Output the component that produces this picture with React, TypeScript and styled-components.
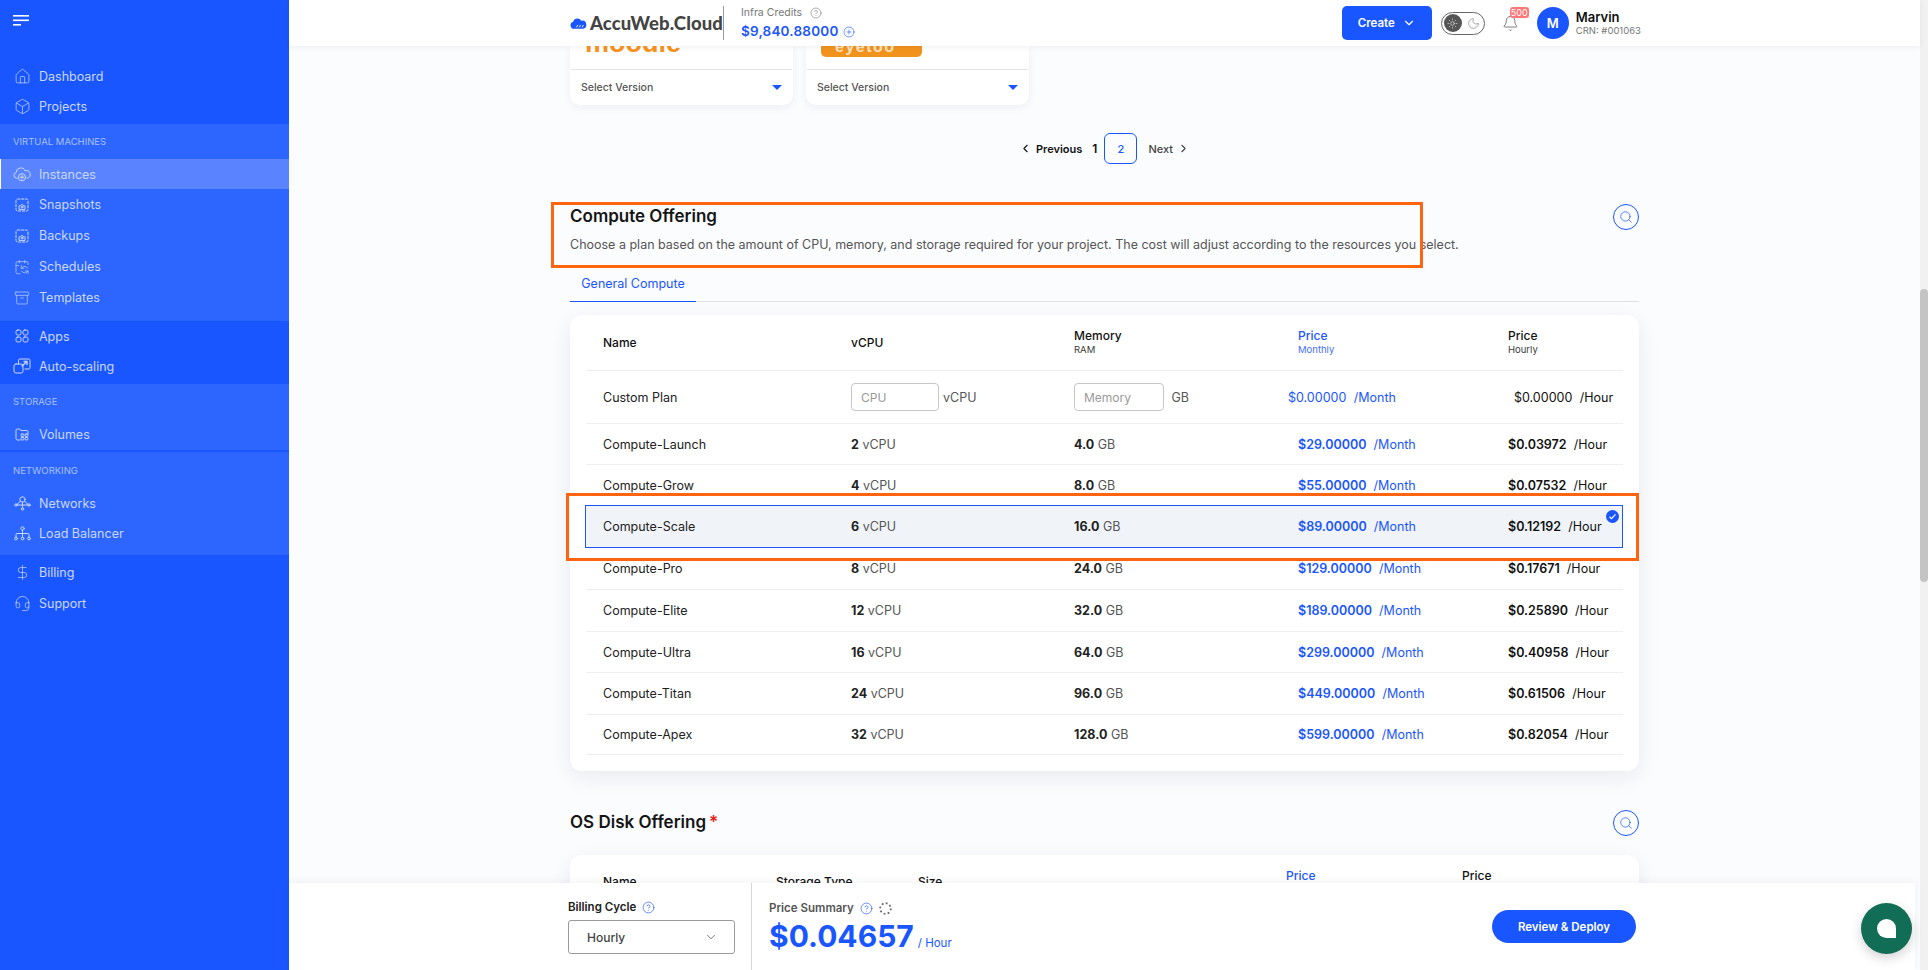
import React from 'react'
import styled, { createGlobalStyle } from 'styled-components'
import {
  Archive,
  Bell,
  Box,
  CalendarSync,
  ChevronDown,
  ChevronLeft,
  ChevronRight,
  CircleHelp,
  CirclePlus,
  DollarSign,
  Headset,
  House,
  Moon,
  Search,
  Sun,
} from 'lucide-react'

const BLUE = '#1a56ff'
const FONT = 'Inter, "Noto Sans", "Liberation Sans", sans-serif'

const GlobalStyle = createGlobalStyle`
  html, body { margin: 0; padding: 0; height: 100%; overflow: hidden; background: #fbfcfe; }
  body { font-family: ${FONT}; color: #111; }
  * { box-sizing: border-box; }
`

const Shell = styled.div`
  display: flex;
  width: 100%;
  height: 100vh;
  overflow: hidden;
`

/* sidebar */
const Sidebar = styled.aside`
  width: 289px;
  flex: none;
  background: ${BLUE};
  color: #c9d7ff;
  font-size: 12.5px;
`
const Burger = styled.div`
  height: 61px;
  padding: 15px 0 0 13px;
  color: #fff;
`
const NavGroup = styled.div<{ $tinted?: boolean; $pad?: string; $gap?: number }>`
  background: ${(p) => (p.$tinted ? '#2c65ff' : 'transparent')};
  padding: ${(p) => p.$pad || '0'};
  margin-top: ${(p) => p.$gap || 0}px;
`
const NavLabel = styled.div<{ $h: number }>`
  height: ${(p) => p.$h}px;
  padding-left: 13px;
  display: flex;
  align-items: center;
  font-size: 9.5px;
  color: #a9c0ff;
`
const NavItem = styled.div<{ $active?: boolean; $h?: number }>`
  height: ${(p) => p.$h || 30}px;
  display: flex;
  align-items: center;
  padding-left: 13px;
  gap: 8px;
  background: ${(p) => (p.$active ? '#5a84ff' : 'transparent')};
  box-shadow: ${(p) => (p.$active ? 'inset 1px 0 0 #fff' : 'none')};
`
const NavIcon = styled.span`
  width: 18px;
  height: 18px;
  flex: none;
  display: flex;
  align-items: center;
  justify-content: center;
`

/* right column */
const Column = styled.div`
  flex: 1;
  min-width: 0;
  display: flex;
  flex-direction: column;
  position: relative;
`
const ScrollTrack = styled.div`
  width: 8px;
  flex: none;
  background: #f1f1f1;
  padding-top: 289px;
`
const ScrollThumb = styled.div`
  height: 293px;
  border-radius: 4px;
  background: #c4c4c4;
`

/* header */
const Header = styled.header`
  height: 46px;
  flex: none;
  background: #fff;
  display: flex;
  align-items: center;
  padding: 0 279px 0 281px;
  box-shadow: 0 1px 6px rgba(20, 30, 60, 0.07);
  position: relative;
  z-index: 2;
`
const Logo = styled.div`
  display: flex;
  align-items: center;
  gap: 3px;
  width: 154px;
  height: 34px;
  border-right: 1px solid #9a9a9a;
`
const LogoText = styled.span`
  font-family: Lato, sans-serif;
  font-weight: 900;
  font-size: 18.5px;
  color: #444;
  letter-spacing: 0.1px;
`
const Credits = styled.div`
  margin-left: 17px;
  display: flex;
  flex-direction: column;
  gap: 3px;
`
const CreditsLabel = styled.div`
  font-size: 10.5px;
  line-height: 14px;
  color: #777;
  display: flex;
  align-items: center;
  gap: 8px;
`
const CreditsValue = styled.div`
  font-size: 13.5px;
  line-height: 17px;
  font-weight: 600;
  color: ${BLUE};
  display: flex;
  align-items: center;
  gap: 4px;
  letter-spacing: 0.2px;
`
const CreateButton = styled.button`
  margin-left: auto;
  width: 90px;
  height: 34px;
  border: 0;
  border-radius: 5px;
  background: ${BLUE};
  color: #fff;
  font: 600 11.5px ${FONT};
  display: flex;
  align-items: center;
  justify-content: center;
  gap: 7px;
`
const ThemeToggle = styled.div`
  margin-left: 9px;
  width: 44px;
  height: 23px;
  border: 1px solid #666;
  border-radius: 12px;
  padding: 2px;
  display: flex;
  align-items: center;
  gap: 5px;
`
const SunDisc = styled.span`
  width: 18px;
  height: 18px;
  border-radius: 50%;
  background: #555;
  color: #fff;
  display: flex;
  align-items: center;
  justify-content: center;
`
const BellWrap = styled.div`
  margin-left: 17px;
  width: 34px;
  height: 34px;
  position: relative;
  display: flex;
  align-items: center;
  color: #666;
`
const BellBadge = styled.span`
  position: absolute;
  top: 1px;
  left: 8px;
  width: 19px;
  height: 11px;
  border-radius: 3px;
  background: #f77;
  color: #fff;
  font-size: 9px;
  line-height: 11px;
  text-align: center;
`
const Avatar = styled.div`
  margin-left: 1px;
  width: 32px;
  height: 32px;
  border-radius: 50%;
  background: ${BLUE};
  color: #fff;
  font-size: 13px;
  font-weight: 600;
  display: flex;
  align-items: center;
  justify-content: center;
`
const UserBlock = styled.div`
  margin-left: 7px;
`
const UserName = styled.div`
  font-size: 13px;
  line-height: 16px;
  font-weight: 600;
  color: #111;
`
const UserCrn = styled.div`
  font-size: 9.5px;
  line-height: 12px;
  color: #777;
`

/* scrolled content */
const Viewport = styled.main`
  flex: 1;
  min-height: 0;
  overflow: hidden;
  padding: 0 281px;
  position: relative;
`
const AppCards = styled.div`
  display: flex;
  gap: 13px;
`
const AppCard = styled.div`
  width: 223px;
  height: 59px;
  background: #fff;
  border-radius: 0 0 10px 10px;
  box-shadow: 0 3px 8px rgba(20, 30, 60, 0.06);
  padding: 0 1px;
`
const AppLogo = styled.div`
  height: 24px;
  overflow: hidden;
  border-bottom: 1px solid #e4e4e4;
  padding-left: 14px;
`
const MoodleText = styled.div`
  font: 700 27px/27px 'Liberation Sans', sans-serif;
  color: #f7931e;
  margin-top: -16px;
`
const OrangeLogo = styled.div`
  width: 101px;
  height: 11px;
  padding-left: 14px;
  background: #f2931e;
  border-radius: 0 0 5px 5px;
  color: #fde4bf;
  font: 700 16px/1 'Liberation Sans', sans-serif;
  letter-spacing: 1.5px;
  overflow: hidden;
`
const OrangeLogoText = styled.div`
  margin-top: -7px;
`
const VersionRow = styled.div`
  height: 34px;
  display: flex;
  align-items: center;
  justify-content: space-between;
  padding: 0 10px;
  font-size: 10.5px;
  font-weight: 500;
  color: #555;
`
const Caret = styled.span`
  width: 0;
  height: 0;
  border-left: 5px solid transparent;
  border-right: 5px solid transparent;
  border-top: 5px solid ${BLUE};
`
const Pager = styled.nav`
  margin-top: 28px;
  height: 31px;
  display: flex;
  align-items: center;
  padding-left: 449px;
  font-size: 11px;
  font-weight: 600;
`
const PageLink = styled.span<{ $light?: boolean }>`
  display: flex;
  align-items: center;
  gap: 4px;
  color: ${(p) => (p.$light ? '#444' : '#111')};
  font-weight: ${(p) => (p.$light ? 500 : 600)};
`
const PageNum = styled.span`
  margin: 0 7px 0 10px;
  font-size: 12px;
`
const PageBox = styled.span`
  width: 33px;
  height: 31px;
  border: 1px solid ${BLUE};
  border-radius: 6px;
  color: ${BLUE};
  font-weight: 500;
  display: flex;
  align-items: center;
  justify-content: center;
  margin-right: 11px;
`
const SectionHead = styled.div<{ $top: number }>`
  margin-top: ${(p) => p.$top}px;
  display: flex;
  justify-content: space-between;
  align-items: flex-start;
`
const SectionTitle = styled.h2`
  margin: 0;
  font-size: 17px;
  line-height: 24px;
  font-weight: 600;
  color: #151515;
`
const Required = styled.span`
  color: #e81c1c;
  margin-left: 3px;
`
const SectionText = styled.p`
  margin: 7px 0 0;
  font-size: 12.5px;
  line-height: 20px;
  color: #555;
`
const SearchButton = styled.span`
  width: 26px;
  height: 26px;
  border: 1px solid ${BLUE};
  border-radius: 50%;
  color: ${BLUE};
  display: flex;
  align-items: center;
  justify-content: center;
  margin-right: 0;
`
const Tabs = styled.div`
  height: 47px;
  display: flex;
  align-items: flex-end;
  border-bottom: 1px solid #dfe1e5;
`
const Tab = styled.div`
  height: 37px;
  width: 126px;
  margin-bottom: -1px;
  border-bottom: 1px solid ${BLUE};
  color: ${BLUE};
  font-size: 12.5px;
  display: flex;
  align-items: center;
  justify-content: center;
`
const TableCard = styled.section<{ $top: number }>`
  margin-top: ${(p) => p.$top}px;
  background: #fff;
  border-radius: 12px;
  padding: 0 16px 16px;
  box-shadow: 0 6px 22px rgba(20, 30, 60, 0.08);
`
const Row = styled.div<{ $h: number; $selected?: boolean; $head?: boolean }>`
  position: relative;
  height: ${(p) => p.$h}px;
  display: grid;
  grid-template-columns: 248px 223px 224px 210px 1fr;
  align-items: center;
  padding-left: 17px;
  font-size: 12.5px;
  color: #222;
  border-bottom: 1px solid ${(p) => (p.$selected ? BLUE : '#eceef0')};
  ${(p) =>
    p.$selected &&
    `
    background: #f0f4f9;
    border: 1px solid ${BLUE};
    margin: -1px 0 0 -1px;
    padding-left: 17px;
    height: ${p.$h + 1}px;
  `}
  ${(p) => p.$head && `font-weight: 500; color: #111;`}
`
const CheckBadge = styled.span`
  position: absolute;
  top: 4px;
  right: 3px;
  width: 13px;
  height: 13px;
  border-radius: 50%;
  background: ${BLUE};
  color: #fff;
  display: flex;
  align-items: center;
  justify-content: center;
`
const HeadCell = styled.div<{ $blue?: boolean }>`
  color: ${(p) => (p.$blue ? BLUE : '#111')};
  font-size: 12px;
  line-height: 15px;
`
const HeadSub = styled.div`
  font-size: 9.5px;
  line-height: 14px;
  font-weight: 400;
  opacity: 0.85;
`
const Strong = styled.strong`
  font-weight: 700;
  color: #222;
`
const Unit = styled.span`
  color: #555;
`
const Money = styled.div<{ $blue?: boolean; $plain?: boolean; $shift?: number }>`
  color: ${(p) => (p.$blue ? BLUE : '#111')};
  font-weight: ${(p) => (p.$plain ? 400 : 600)};
  font-size: 12.5px;
  white-space: nowrap;
  margin-left: ${(p) => p.$shift || 0}px;
`
const MoneyUnit = styled.span`
  font-weight: 400;
  margin-left: 4px;
`
const FieldWrap = styled.div`
  display: flex;
  align-items: center;
  color: #555;
  gap: 4px;
`
const Field = styled.input<{ $w: number }>`
  width: ${(p) => p.$w}px;
  height: 28px;
  border: 1px solid #c4c6ca;
  border-radius: 4px;
  padding: 0 9px;
  font: 400 12px ${FONT};
  background: #fff;
  &::placeholder { color: #999; }
`
const OsHeadRow = styled.div`
  display: grid;
  grid-template-columns: 173px 142px 368px 176px 1fr;
  padding: 13px 0 0 17px;
  font-size: 12px;
  font-weight: 500;
  line-height: 15px;
`
const OsHeadCell = styled.div<{ $blue?: boolean; $low?: boolean }>`
  color: ${(p) => (p.$blue ? BLUE : '#111')};
  padding-top: ${(p) => (p.$low ? 6 : 0)}px;
`

/* footer */
const Footer = styled.footer`
  height: 87px;
  flex: none;
  margin-right: 5px;
  background: #fff;
  display: flex;
  padding: 0 279px;
  position: relative;
  z-index: 2;
  box-shadow: 0 -2px 8px rgba(20, 30, 60, 0.05);
`
const BillingBlock = styled.div`
  width: 184px;
  flex: none;
  border-right: 1px solid #d8d8d8;
  padding-top: 15px;
`
const FieldLabel = styled.div<{ $muted?: boolean }>`
  height: 18px;
  font-size: 11.5px;
  font-weight: 600;
  color: ${(p) => (p.$muted ? '#555' : '#222')};
  display: flex;
  align-items: center;
  gap: 6px;
`
const BillingSelect = styled.div`
  margin-top: 4px;
  width: 167px;
  height: 34px;
  border: 1px solid #9a9a9a;
  border-radius: 3px;
  padding: 0 16px 0 18px;
  display: flex;
  align-items: center;
  justify-content: space-between;
  font-size: 12px;
  font-weight: 500;
  color: #444;
`
const PriceBlock = styled.div`
  padding: 16px 0 0 17px;
`
const PriceLine = styled.div`
  display: flex;
  align-items: baseline;
  margin-top: 1px;
  gap: 4px;
  color: ${BLUE};
`
const PriceValue = styled.span`
  font-size: 30px;
  line-height: 36px;
  font-weight: 700;
`
const PriceUnit = styled.span`
  font-size: 11.5px;
`
const DeployButton = styled.button`
  margin: 27px 0 0 auto;
  width: 144px;
  height: 33px;
  border: 0;
  border-radius: 17px;
  background: ${BLUE};
  color: #fff;
  font: 600 11.5px ${FONT};
`
const ChatButton = styled.div`
  position: absolute;
  right: 8px;
  bottom: 16px;
  z-index: 3;
  width: 51px;
  height: 51px;
  border-radius: 50%;
  background: #116d55;
  box-shadow: 0 4px 12px rgba(0, 0, 0, 0.18);
  display: flex;
  align-items: center;
  justify-content: center;
`
const ChatDrop = styled.span`
  width: 19px;
  height: 19px;
  background: #fff;
  border-radius: 50% 50% 0 50%;
`

/* review annotations drawn over the capture */
const Annotation = styled.div<{ $left: number; $top: number; $w: number; $h: number }>`
  position: absolute;
  left: ${(p) => p.$left}px;
  top: ${(p) => p.$top}px;
  width: ${(p) => p.$w}px;
  height: ${(p) => p.$h}px;
  border: 3px solid #ff6410;
  pointer-events: none;
`

const line = { fill: 'none', stroke: 'currentColor', strokeWidth: 1, strokeLinecap: 'round', strokeLinejoin: 'round' } as const

const CloudPlusIcon = () => (
  <svg width="18" height="18" viewBox="0 0 18 18" {...line}>
    <path d="M4.5 13.2H3.6a2.9 2.9 0 0 1-.4-5.7 4.6 4.6 0 0 1 8.9-1.6 3.7 3.7 0 0 1 2.6 7.1 2 2 0 0 1-.7.2" />
    <circle cx="9" cy="12.2" r="3.6" />
    <path d="M9 10.4v3.6M7.2 12.2h3.6" />
  </svg>
)
const SnapshotIcon = () => (
  <svg width="14" height="14" viewBox="0 0 14 14" {...line}>
    <rect x="1" y="1" width="12" height="12" rx="1.5" strokeDasharray="2.5 1.5" />
    <path d="M4 11V8.2c0-.4.3-.7.7-.7h1l.7-1h1.2l.7 1h1c.4 0 .7.3.7.7V11z" />
    <circle cx="7" cy="9" r="1" />
  </svg>
)
const AppsIcon = () => (
  <svg width="14" height="14" viewBox="0 0 14 14" {...line}>
    <rect x="1" y="1" width="5" height="5" rx="1.7" />
    <rect x="8" y="1" width="5" height="5" rx="1.7" />
    <rect x="1" y="8" width="5" height="5" rx="1.7" />
    <rect x="8" y="8" width="5" height="5" rx="1.7" />
  </svg>
)
const ScaleIcon = () => (
  <svg width="18" height="16" viewBox="0 0 18 16" {...line}>
    <path d="M5.5 6V2.2C5.5 1.5 6 1 6.700 1h9c.7 0 1.300.5 1.300 1.200v7.600c0 .7-.6 1.200-1.300 1.200H12" />
    <rect x="1" y="6" width="9" height="9" rx="2" />
    <path d="M9 8l5-4.500M11 3.500h3V6.500" strokeWidth="1.300" />
  </svg>
)
const VolumeIcon = () => (
  <svg width="14" height="13" viewBox="0 0 14 13" {...line}>
    <path d="M5 12H2.500C1.700 12 1 11.300 1 10.500V2.200C1 1.500 1.500 1 2.200 1h2.600l1 1.500h6c.7 0 1.200.5 1.200 1.200V6" />
    <rect x="6" y="6" width="3" height="2.500" rx="1" />
    <rect x="10" y="6" width="3" height="2.500" rx="1" />
    <rect x="6" y="9.500" width="3" height="2.500" rx="1" />
    <rect x="10" y="9.500" width="3" height="2.500" rx="1" />
  </svg>
)
const NetworkIcon = () => (
  <svg width="17" height="15" viewBox="0 0 17 15" {...line}>
    <circle cx="8.500" cy="3.500" r="2.700" />
    <circle cx="2" cy="9" r="1.200" />
    <circle cx="15" cy="9" r="1.200" />
    <circle cx="8.500" cy="13" r="1.200" />
    <path d="M8.500 6.200v5.600M3.200 9h10.600M3 8.400l3.300-3M14 8.400l-3.300-3" />
  </svg>
)
const BalancerIcon = () => (
  <svg width="17" height="15" viewBox="0 0 17 15" {...line}>
    <circle cx="8.500" cy="2.500" r="1.700" />
    <circle cx="2" cy="12.500" r="1.400" />
    <circle cx="8.500" cy="12.500" r="1.400" />
    <circle cx="15" cy="12.500" r="1.400" />
    <path d="M8.500 4.200v6.900M2 11.100V8.500c0-.6.400-1 1-1h11c.6 0 1 .4 1 1v2.600" />
  </svg>
)
const BurgerIcon = () => (
  <svg width="16" height="12" viewBox="0 0 16 12" fill="currentColor">
    <rect y="0" width="16" height="1.600" />
    <rect y="4.500" width="16" height="1.600" />
    <rect y="9" width="8" height="1.600" />
  </svg>
)
const LogoCloud = () => (
  <svg width="24" height="15" viewBox="0 0 24 15">
    <path
      fill="#1a56ff"
      d="M5.500 15a5 5 0 0 1-1.200-9.800A6.200 6.200 0 0 1 15.800 3.700 5.800 5.800 0 0 1 18.500 15z"
    />
    <path d="M9 13l2-3.500M13 13l2-3.500M17 13l2-3.500" stroke="#fff" strokeWidth="1.200" fill="none" />
  </svg>
)
const Spinner = () => (
  <svg width="13" height="13" viewBox="0 0 13 13">
    <circle cx="6.500" cy="6.500" r="5.300" fill="none" stroke="#666" strokeWidth="1.800" strokeDasharray="1.800 2.300" />
  </svg>
)
const CheckMark = () => (
  <svg width="9" height="9" viewBox="0 0 9 9" fill="none" stroke="currentColor" strokeWidth="1.200">
    <path d="M1.500 4.800l2 1.900 4-4.400" />
  </svg>
)

const navIcon = (Icon: typeof House, size = 17) => <Icon size={size} strokeWidth={1} />

const plans = [
  { name: 'Compute-Launch', cpu: '2', ram: '4.0', month: '$29.00000', hour: '$0.03972', h: 41 },
  { name: 'Compute-Grow', cpu: '4', ram: '8.0', month: '$55.00000', hour: '$0.07532', h: 41 },
  { name: 'Compute-Scale', cpu: '6', ram: '16.0', month: '$89.00000', hour: '$0.12192', h: 42, selected: true },
  { name: 'Compute-Pro', cpu: '8', ram: '24.0', month: '$129.00000', hour: '$0.17671', h: 42 },
  { name: 'Compute-Elite', cpu: '12', ram: '32.0', month: '$189.00000', hour: '$0.25890', h: 42 },
  { name: 'Compute-Ultra', cpu: '16', ram: '64.0', month: '$299.00000', hour: '$0.40958', h: 41 },
  { name: 'Compute-Titan', cpu: '24', ram: '96.0', month: '$449.00000', hour: '$0.61506', h: 42 },
  { name: 'Compute-Apex', cpu: '32', ram: '128.0', month: '$599.00000', hour: '$0.82054', h: 40 },
]

export default function App() {
  return (
    <>
      <GlobalStyle />
      <Shell>
        <Sidebar>
          <Burger>
            <BurgerIcon />
          </Burger>
          <NavItem><NavIcon>{navIcon(House)}</NavIcon>Dashboard</NavItem>
          <NavItem><NavIcon>{navIcon(Box)}</NavIcon>Projects</NavItem>
          <NavGroup $tinted $pad="0 0 8px" $gap={3}>
            <NavLabel $h={35}>VIRTUAL MACHINES</NavLabel>
            <NavItem $active><NavIcon><CloudPlusIcon /></NavIcon>Instances</NavItem>
            <NavItem $h={31}><NavIcon><SnapshotIcon /></NavIcon>Snapshots</NavItem>
            <NavItem $h={31}><NavIcon><SnapshotIcon /></NavIcon>Backups</NavItem>
            <NavItem $h={31}><NavIcon>{navIcon(CalendarSync, 16)}</NavIcon>Schedules</NavItem>
            <NavItem $h={31}><NavIcon>{navIcon(Archive, 16)}</NavIcon>Templates</NavItem>
          </NavGroup>
          <NavItem><NavIcon><AppsIcon /></NavIcon>Apps</NavItem>
          <NavItem><NavIcon><ScaleIcon /></NavIcon>Auto-scaling</NavItem>
          <NavGroup $tinted $pad="0 0 1px" $gap={3}>
            <NavLabel $h={35}>STORAGE</NavLabel>
            <NavItem><NavIcon><VolumeIcon /></NavIcon>Volumes</NavItem>
          </NavGroup>
          <NavGroup $tinted $pad="0 0 7px" $gap={2}>
            <NavLabel $h={36}>NETWORKING</NavLabel>
            <NavItem><NavIcon><NetworkIcon /></NavIcon>Networks</NavItem>
            <NavItem><NavIcon><BalancerIcon /></NavIcon>Load Balancer</NavItem>
          </NavGroup>
          <NavGroup $pad="2px 0 0">
            <NavItem><NavIcon>{navIcon(DollarSign)}</NavIcon>Billing</NavItem>
            <NavItem $h={32}><NavIcon>{navIcon(Headset)}</NavIcon>Support</NavItem>
          </NavGroup>
        </Sidebar>

        <Column>
          <Header>
            <Logo>
              <LogoCloud />
              <LogoText>AccuWeb.Cloud</LogoText>
            </Logo>
            <Credits>
              <CreditsLabel>
                Infra Credits <CircleHelp size={12} strokeWidth={1.200} />
              </CreditsLabel>
              <CreditsValue>
                $9,840.88000 <CirclePlus size={12} strokeWidth={1.200} />
              </CreditsValue>
            </Credits>
            <CreateButton>
              Create <ChevronDown size={14} />
            </CreateButton>
            <ThemeToggle>
              <SunDisc><Sun size={11} strokeWidth={1.200} /></SunDisc>
              <Moon size={13} strokeWidth={1} color="#666" />
            </ThemeToggle>
            <BellWrap>
              <Bell size={17} strokeWidth={1.200} />
              <BellBadge>500</BellBadge>
            </BellWrap>
            <Avatar>M</Avatar>
            <UserBlock>
              <UserName>Marvin</UserName>
              <UserCrn>CRN: #001063</UserCrn>
            </UserBlock>
          </Header>

          <Viewport>
            <AppCards>
              <AppCard>
                <AppLogo><MoodleText>moodle</MoodleText></AppLogo>
                <VersionRow>Select Version<Caret /></VersionRow>
              </AppCard>
              <AppCard>
                <AppLogo>
                  <OrangeLogo><OrangeLogoText>eyetoo</OrangeLogoText></OrangeLogo>
                </AppLogo>
                <VersionRow>Select Version<Caret /></VersionRow>
              </AppCard>
            </AppCards>

            <Pager>
              <PageLink><ChevronLeft size={13} />Previous</PageLink>
              <PageNum>1</PageNum>
              <PageBox>2</PageBox>
              <PageLink $light>Next<ChevronRight size={13} /></PageLink>
            </Pager>

            <SectionHead $top={40}>
              <div>
                <SectionTitle>Compute Offering</SectionTitle>
                <SectionText>
                  Choose a plan based on the amount of CPU, memory, and storage required for your project. The cost will adjust according to the resources you select.
                </SectionText>
              </div>
              <SearchButton><Search size={14} strokeWidth={1.200} /></SearchButton>
            </SectionHead>

            <Tabs><Tab>General Compute</Tab></Tabs>

            <TableCard $top={13}>
              <Row $h={56} $head>
                <HeadCell>Name</HeadCell>
                <HeadCell>vCPU</HeadCell>
                <HeadCell>Memory<HeadSub>RAM</HeadSub></HeadCell>
                <HeadCell $blue>Price<HeadSub>Monthly</HeadSub></HeadCell>
                <HeadCell>Price<HeadSub>Hourly</HeadSub></HeadCell>
              </Row>
              <Row $h={53}>
                <div>Custom Plan</div>
                <FieldWrap><Field $w={88} placeholder="CPU" />vCPU</FieldWrap>
                <FieldWrap><Field $w={90} placeholder="Memory" />&nbsp;GB</FieldWrap>
                <Money $blue $plain $shift={-10}>$0.00000 <MoneyUnit>/Month</MoneyUnit></Money>
                <Money $plain $shift={6}>$0.00000 <MoneyUnit>/Hour</MoneyUnit></Money>
              </Row>
              {plans.map((plan) => (
                <Row key={plan.name} $h={plan.h} $selected={plan.selected}>
                  <div>{plan.name}</div>
                  <div><Strong>{plan.cpu}</Strong> <Unit>vCPU</Unit></div>
                  <div><Strong>{plan.ram}</Strong> <Unit>GB</Unit></div>
                  <Money $blue>{plan.month} <MoneyUnit>/Month</MoneyUnit></Money>
                  <Money>{plan.hour} <MoneyUnit>/Hour</MoneyUnit></Money>
                  {plan.selected && <CheckBadge><CheckMark /></CheckBadge>}
                </Row>
              ))}
            </TableCard>

            <SectionHead $top={39}>
              <SectionTitle>OS Disk Offering<Required>*</Required></SectionTitle>
              <SearchButton><Search size={14} strokeWidth={1.200} /></SearchButton>
            </SectionHead>

            <TableCard $top={19}>
              <OsHeadRow>
                <OsHeadCell $low>Name</OsHeadCell>
                <OsHeadCell $low>Storage Type</OsHeadCell>
                <OsHeadCell $low>Size</OsHeadCell>
                <OsHeadCell $blue>Price</OsHeadCell>
                <OsHeadCell>Price</OsHeadCell>
              </OsHeadRow>
            </TableCard>

            <Annotation $left={262} $top={156} $w={872} $h={66} />
            <Annotation $left={277} $top={447} $w={1073} $h={68} />
          </Viewport>

          <Footer>
            <BillingBlock>
              <FieldLabel>Billing Cycle <CircleHelp size={13} strokeWidth={1.200} color={BLUE} /></FieldLabel>
              <BillingSelect>Hourly <ChevronDown size={14} strokeWidth={1.200} /></BillingSelect>
            </BillingBlock>
            <PriceBlock>
              <FieldLabel $muted>
                Price Summary <CircleHelp size={13} strokeWidth={1.200} color={BLUE} /> <Spinner />
              </FieldLabel>
              <PriceLine>
                <PriceValue>$0.04657</PriceValue>
                <PriceUnit>/ Hour</PriceUnit>
              </PriceLine>
            </PriceBlock>
            <DeployButton>Review &amp; Deploy</DeployButton>
          </Footer>
          <ChatButton><ChatDrop /></ChatButton>
        </Column>

        <ScrollTrack><ScrollThumb /></ScrollTrack>
      </Shell>
    </>
  )
}
